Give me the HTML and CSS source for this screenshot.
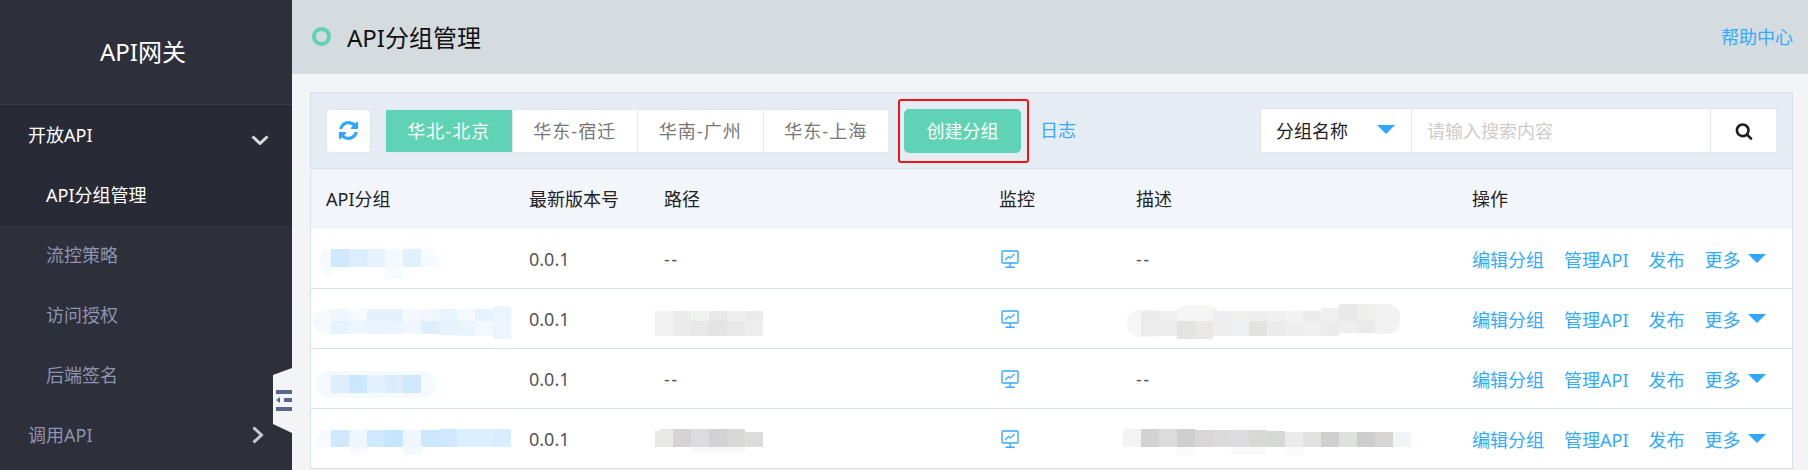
FILE: index.html
```html
<!DOCTYPE html>
<html lang="zh">
<head>
  <meta charset="utf-8">
  <title>API分组管理</title>
  <link rel="stylesheet" href="styles.css">
</head>
<body>

<aside class="sidebar">
  <div class="brand">API网关</div>
  <nav>
    <div class="nav-open">
      <a class="nav-group active">开放API
        <svg class="chev-down" width="18" height="10" viewBox="0 0 18 10"><path d="M1.5 1.5 9 8.5l7.5-7" fill="none" stroke="#d8d9de" stroke-width="3"/></svg>
      </a>
      <a class="nav-item active">API分组管理</a>
    </div>
    <a class="nav-item">流控策略</a>
    <a class="nav-item">访问授权</a>
    <a class="nav-item">后端签名</a>
    <a class="nav-group">调用API
      <svg class="chev-right" width="12" height="18" viewBox="0 0 12 18"><path d="M1.5 1.5 9.5 9l-8 7.5" fill="none" stroke="#c8cad2" stroke-width="3"/></svg>
    </a>
  </nav>
  <div class="collapse-tab">
    <svg width="16" height="21" viewBox="0 0 16 21"><path d="M0 0h16v4H0zM8 8h8v4H8zM0 10l4-3v6zM0 17h16v4H0z" fill="#56688a"/></svg>
  </div>
</aside>

<div class="content">
  <header class="page-head">
    <span class="ring"></span>
    <h1>API分组管理</h1>
    <a class="help">帮助中心</a>
  </header>

  <main class="page-body">
    <section class="panel">
      <div class="toolbar">
        <button class="refresh">
          <svg width="19" height="19" viewBox="0 0 1536 1536"><path fill="#2ea7ff" d="M1511 928q0 5-1 7-64 268-268 434.5t-478 166.5q-146 0-282.5-55t-243.5-157l-129 129q-19 19-45 19t-45-19-19-45v-448q0-26 19-45t45-19h448q26 0 45 19t19 45-19 45l-137 137q71 66 161 102t187 36q134 0 250-65t186-179q11-17 53-117 8-23 30-23h192q13 0 22.5 9.5t9.5 22.5zm25-800v448q0 26-19 45t-45 19h-448q-26 0-45-19t-19-45 19-45l138-138q-148-137-349-137-134 0-250 65t-186 179q-11 17-53 117-8 23-30 23h-199q-13 0-22.5-9.5t-9.5-22.5v-7q65-268 270-434.5t480-166.5q146 0 284 55.5t245 156.5l130-129q19-19 45-19t45 19 19 45z"/></svg>
        </button>
        <div class="tabs">
          <a class="tab on">华北-北京</a>
          <a class="tab">华东-宿迁</a>
          <a class="tab">华南-广州</a>
          <a class="tab">华东-上海</a>
        </div>
        <div class="mark-box"><button class="create">创建分组</button></div>
        <a class="log">日志</a>
        <div class="search">
          <div class="search-type">分组名称<span class="tri"></span></div>
          <div class="search-input">请输入搜索内容</div>
          <button class="search-btn">
            <svg width="18" height="18" viewBox="0 0 1792 1792"><path fill="#1c1c1c" d="M1216 832q0-185-131.5-316.5t-316.5-131.5-316.5 131.5-131.5 316.5 131.5 316.5 316.5 131.5 316.5-131.5 131.5-316.5zm512 832q0 52-38 90t-90 38q-54 0-90-38l-343-342q-179 124-399 124-143 0-273.5-55.5t-225-150-150-225-55.5-273.5 55.5-273.5 150-225 225-150 273.5-55.5 273.5 55.5 225 150 150 225 55.5 273.5q0 220-124 399l343 343q37 37 37 90z"/></svg>
          </button>
        </div>
      </div>

      <div class="row thead">
        <div>API分组</div><div>最新版本号</div><div>路径</div><div>监控</div><div>描述</div><div>操作</div>
      </div>

      <div class="row">
        <div class="col-name">
          <svg class="blur" width="218" height="59" shape-rendering="crispEdges">
            <path d="M12 21q-3 4-3 11 0 7 6 12h6V19H12zM110 19h16l-4 0 8 18h-20z" fill="#f5faff"/>
            <rect x="20" y="19" width="18" height="18" fill="#cfe8ff"/><rect x="38" y="19" width="18" height="18" fill="#dcedff"/><rect x="56" y="19" width="18" height="18" fill="#e6f2fd"/><rect x="74" y="19" width="18" height="18" fill="#f2faff"/><rect x="92" y="19" width="18" height="18" fill="#e0f0ff"/><rect x="74" y="37" width="18" height="12" fill="#f5fbff"/>
          </svg>
        </div>
        <div class="ver">0.0.1</div>
        <div class="dash">--</div>
        <div class="monitor"><svg class="mon" width="18" height="18" viewBox="0 0 18 18"><use href="#mon-icon"/></svg></div>
        <div class="dash">--</div>
        <div class="ops"><a>编辑分组</a><a>管理API</a><a>发布</a><a class="more">更多<span class="tri"></span></a></div>
      </div>

      <div class="row">
        <div class="col-name">
          <svg class="blur" width="218" height="59" shape-rendering="crispEdges">
            <path d="M12 19q-10 4-10 12 0 9 10 13h8V19z" fill="#f5faff"/>
            <g>
              <rect x="20" y="19" width="18" height="12" fill="#eef6fe"/><rect x="38" y="19" width="18" height="12" fill="#f6faff"/><rect x="56" y="19" width="18" height="12" fill="#e4f1fd"/><rect x="74" y="19" width="18" height="12" fill="#e4f1fd"/><rect x="92" y="19" width="18" height="12" fill="#f2f8fe"/><rect x="110" y="19" width="18" height="12" fill="#f0f7fe"/><rect x="128" y="19" width="18" height="12" fill="#e9f4fe"/><rect x="146" y="19" width="18" height="12" fill="#f4f9fe"/><rect x="164" y="19" width="18" height="12" fill="#e6f3fe"/><rect x="182" y="16" width="18" height="15" fill="#eaf5fe"/>
              <rect x="20" y="31" width="18" height="13" fill="#e6f2fe"/><rect x="38" y="31" width="18" height="13" fill="#ecf6fe"/><rect x="56" y="31" width="18" height="13" fill="#e8f3fe"/><rect x="74" y="31" width="18" height="13" fill="#e9f4fe"/><rect x="92" y="31" width="18" height="13" fill="#eff6fe"/><rect x="110" y="31" width="18" height="13" fill="#ddeeff"/><rect x="128" y="31" width="18" height="14" fill="#e6f2fe"/><rect x="146" y="31" width="18" height="15" fill="#e9f4fe"/><rect x="164" y="31" width="18" height="15" fill="#f3f9fe"/><rect x="182" y="31" width="18" height="18" fill="#ecf5fe"/>
            </g>
          </svg>
        </div>
        <div class="ver">0.0.1</div>
        <div>
          <svg class="blur blur-path" width="108" height="59" shape-rendering="crispEdges">
            <rect x="0" y="21" width="18" height="25" fill="#f2f2f2"/><rect x="18" y="21" width="18" height="10" fill="#ebebeb"/><rect x="36" y="21" width="18" height="10" fill="#f0f2f0"/><rect x="54" y="21" width="18" height="10" fill="#e8e8e8"/><rect x="72" y="21" width="18" height="10" fill="#eeeeee"/><rect x="90" y="21" width="18" height="10" fill="#ebebed"/>
            <rect x="18" y="31" width="18" height="15" fill="#ebebeb"/><rect x="36" y="31" width="18" height="15" fill="#e8e8e8"/><rect x="54" y="31" width="18" height="15" fill="#e3e3e3"/><rect x="72" y="31" width="18" height="15" fill="#e8e8e8"/><rect x="90" y="31" width="18" height="15" fill="#eeeeee"/>
          </svg>
        </div>
        <div class="monitor"><svg class="mon" width="18" height="18" viewBox="0 0 18 18"><use href="#mon-icon"/></svg></div>
        <div>
          <svg class="blur blur-desc" width="274" height="59">
            <rect x="0" y="20" width="40" height="27" rx="12" fill="#f6f6f6"/><rect x="240" y="14" width="33" height="30" rx="12" fill="#f2f2f2"/><rect x="46" y="15" width="48" height="34" rx="14" fill="#f5f5f5"/>
            <g shape-rendering="crispEdges">
            <rect x="14" y="21" width="18" height="10" fill="#eaeaea"/><rect x="32" y="21" width="18" height="10" fill="#efefef"/><rect x="50" y="21" width="18" height="10" fill="#f5f5f5"/><rect x="68" y="21" width="18" height="10" fill="#f5f5f3"/><rect x="86" y="21" width="18" height="10" fill="#eeeef0"/><rect x="104" y="21" width="18" height="10" fill="#f0f0ee"/><rect x="122" y="21" width="18" height="10" fill="#eeeeee"/><rect x="140" y="21" width="18" height="10" fill="#f0f0f0"/><rect x="158" y="21" width="18" height="10" fill="#f2f2f2"/><rect x="176" y="21" width="18" height="10" fill="#ebebeb"/><rect x="194" y="18" width="18" height="13" fill="#efefef"/><rect x="212" y="14" width="18" height="17" fill="#e8e8e8"/><rect x="230" y="14" width="18" height="17" fill="#eeeeec"/>
            <rect x="14" y="31" width="18" height="15" fill="#ececec"/><rect x="32" y="31" width="18" height="15" fill="#ededed"/><rect x="50" y="31" width="18" height="18" fill="#e3e3e1"/><rect x="68" y="31" width="18" height="18" fill="#e9e8e6"/><rect x="86" y="31" width="18" height="15" fill="#eeeeee"/><rect x="104" y="31" width="18" height="15" fill="#eff0f3"/><rect x="122" y="31" width="18" height="15" fill="#e2e2e0"/><rect x="140" y="31" width="18" height="15" fill="#ebebeb"/><rect x="158" y="31" width="18" height="15" fill="#eeeeee"/><rect x="176" y="31" width="18" height="15" fill="#efefef"/><rect x="194" y="31" width="18" height="15" fill="#ebebeb"/><rect x="212" y="31" width="18" height="12" fill="#eeeeee"/><rect x="230" y="31" width="18" height="12" fill="#e9e9e9"/>
            </g>
          </svg>
        </div>
        <div class="ops"><a>编辑分组</a><a>管理API</a><a>发布</a><a class="more">更多<span class="tri"></span></a></div>
      </div>

      <div class="row">
        <div class="col-name">
          <svg class="blur" width="218" height="59" shape-rendering="geometricPrecision">
            <rect x="5" y="21" width="120" height="27" rx="13" fill="#f5faff"/>
            <g shape-rendering="crispEdges"><rect x="20" y="25" width="18" height="18" fill="#dcedff"/><rect x="38" y="25" width="18" height="18" fill="#cbe6ff"/><rect x="56" y="25" width="18" height="18" fill="#e3f1fd"/><rect x="74" y="25" width="18" height="18" fill="#daecff"/><rect x="92" y="25" width="18" height="18" fill="#cfe8ff"/></g>
          </svg>
        </div>
        <div class="ver">0.0.1</div>
        <div class="dash">--</div>
        <div class="monitor"><svg class="mon" width="18" height="18" viewBox="0 0 18 18"><use href="#mon-icon"/></svg></div>
        <div class="dash">--</div>
        <div class="ops"><a>编辑分组</a><a>管理API</a><a>发布</a><a class="more">更多<span class="tri"></span></a></div>
      </div>

      <div class="row">
        <div class="col-name">
          <svg class="blur" width="218" height="59" shape-rendering="crispEdges">
            <path d="M20 20h-6q-10 2-10 17h16z" fill="#f5faff"/>
            <rect x="20" y="20" width="18" height="17" fill="#cfe8ff"/><rect x="38" y="20" width="18" height="17" fill="#eef6fe"/><rect x="56" y="20" width="18" height="17" fill="#cde8ff"/><rect x="74" y="20" width="18" height="17" fill="#c8e5ff"/><rect x="92" y="20" width="18" height="17" fill="#eef6fe"/><rect x="110" y="20" width="18" height="17" fill="#cbe8ff"/><rect x="128" y="19" width="18" height="18" fill="#cfe8ff"/><rect x="146" y="19" width="18" height="18" fill="#dcefff"/><rect x="164" y="19" width="18" height="18" fill="#dcefff"/><rect x="182" y="19" width="18" height="18" fill="#d8edff"/>
            <rect x="38" y="37" width="18" height="7" fill="#f7fbff"/><rect x="92" y="37" width="18" height="7" fill="#f3f8ff"/>
          </svg>
        </div>
        <div class="ver">0.0.1</div>
        <div>
          <svg class="blur blur-path" width="108" height="59" shape-rendering="crispEdges">
            <rect x="0" y="21" width="18" height="16" fill="#e8e8e6"/><rect x="4" y="19" width="14" height="2" fill="#e8e8e6"/><rect x="18" y="19" width="18" height="18" fill="#d6d4d2"/><rect x="36" y="19" width="18" height="18" fill="#dcdcde"/><rect x="54" y="19" width="18" height="18" fill="#d2d2d4"/><rect x="72" y="19" width="18" height="18" fill="#d8d8d4"/><rect x="90" y="22" width="18" height="15" fill="#dcdcdc"/>
            <rect x="36" y="37" width="54" height="6" fill="#f8f8f8"/>
          </svg>
        </div>
        <div class="monitor"><svg class="mon" width="18" height="18" viewBox="0 0 18 18"><use href="#mon-icon"/></svg></div>
        <div>
          <svg class="blur blur-desc-b" width="288" height="59" shape-rendering="crispEdges">
            <rect x="0" y="19" width="18" height="18" fill="#f3f3f3"/><rect x="18" y="19" width="18" height="18" fill="#d2d2d2"/><rect x="36" y="19" width="18" height="18" fill="#dcdcdc"/><rect x="54" y="19" width="18" height="18" fill="#cfcfcf"/><rect x="72" y="20" width="18" height="17" fill="#d8d6d6"/><rect x="90" y="20" width="18" height="17" fill="#dadada"/><rect x="108" y="20" width="18" height="17" fill="#dddde0"/><rect x="126" y="20" width="18" height="17" fill="#d8d8d6"/><rect x="144" y="21" width="18" height="16" fill="#d6d8d6"/><rect x="162" y="22" width="18" height="15" fill="#ebebeb"/><rect x="180" y="22" width="18" height="15" fill="#e2e2e0"/><rect x="198" y="22" width="18" height="15" fill="#cfcfcf"/><rect x="216" y="22" width="18" height="15" fill="#dfe1df"/><rect x="234" y="22" width="18" height="15" fill="#cdcdcd"/><rect x="252" y="22" width="18" height="15" fill="#d8d6d4"/><rect x="270" y="22" width="18" height="15" fill="#f2f5f8"/>
            <rect x="54" y="37" width="18" height="9" fill="#fafafa"/><rect x="108" y="37" width="36" height="8" fill="#fafafa"/><rect x="162" y="37" width="18" height="9" fill="#fafafa"/>
          </svg>
        </div>
        <div class="ops"><a>编辑分组</a><a>管理API</a><a>发布</a><a class="more">更多<span class="tri"></span></a></div>
      </div>
    </section>
  </main>
</div>

<svg class="defs" width="0" height="0">
  <symbol id="mon-icon" viewBox="0 0 18 18">
    <rect x="1" y="1" width="16" height="12" rx="1" fill="none" stroke="#33aaff" stroke-width="1.4"/>
    <path d="M4 10l3.5-3.5 2 1.5L13.5 4" fill="none" stroke="#33aaff" stroke-width="1.2"/>
    <path d="M9 13v4M4.5 17.2h9" fill="none" stroke="#33aaff" stroke-width="1.4"/>
  </symbol>
</svg>

</body>
</html>
```

FILE: styles.css
```css
* { box-sizing: border-box; }
html, body { height: 470px; overflow: hidden; }
body {
  margin: 0;
  display: flex;
  font-family: "Noto Sans", "Noto Sans CJK SC", "Liberation Sans", sans-serif;
  font-size: 18px;
  color: #222;
  background: #f3f4f6;
}
a { color: inherit; text-decoration: none; }
button { font: inherit; cursor: pointer; }
.defs { position: absolute; }

/* sidebar */
.sidebar { position: relative; width: 292px; flex: none; background: #2d2f3b; color: #8e94ad; }
.brand { height: 105px; border-bottom: 1px solid #3a3d4a; display: flex; align-items: center; justify-content: center; padding: 0 6px 4px 0; font-size: 24px; color: #fff; }
.nav-open { background: #282a35; }
.nav-group { height: 60px; padding: 0 23px 2px 28px; display: flex; align-items: center; justify-content: space-between; }
.nav-item { height: 60px; padding: 0 0 2px 46px; display: flex; align-items: center; }
.active { color: #fff; }
.chev-down { margin-top: 12px; }
.chev-right { margin-right: 5px; margin-top: 2px; }
.collapse-tab {
  position: absolute;
  right: 0;
  top: 368px;
  width: 19px;
  height: 65px;
  background: #f3f4f6;
  clip-path: polygon(0 7px, 100% 0, 100% 100%, 0 56px);
  padding: 22px 0 0 3px;
  display: flex;
}

/* header */
.content { flex: 1; min-width: 0; }
.page-head { height: 74px; background: #d5dcdf; display: flex; align-items: center; padding: 0 15px 2px 19px; }
.ring { width: 19px; height: 19px; border: 4px solid #5fd3b3; border-radius: 50%; margin-right: 16px; margin-left: 1px; }
h1 { margin: 0; font-size: 24px; font-weight: normal; color: #111; }
.help { margin-left: auto; color: #33aaff; }

/* panel */
.page-body { padding: 18px 15px 0 18px; }
.panel { border: 1px solid #d7e2ec; border-bottom: 0; background: #fff; }
.toolbar { height: 76px; padding: 0 15px; display: flex; align-items: center; background: #e5ecf4; border-bottom: 1px solid #d7e2ec; }
.refresh { width: 45px; height: 44px; padding: 0; margin-right: 14px; background: #fff; border: 1px solid #dfe7ef; border-radius: 4px; display: flex; align-items: center; justify-content: center; }
.tabs { display: flex; height: 44px; background: #fff; border: 1px solid #dfe7ef; }
.tab { width: 125.5px; padding-bottom: 1px; letter-spacing: 1px; display: flex; align-items: center; justify-content: center; color: #777; border-left: 1px solid #dfe7ef; }
.tab:first-child { border-left: 0; }
.tab.on { background: #5fd3b3; color: #fff; }
.mark-box { margin-left: 9px; padding: 8px 6px 8px 4px; border: 2px solid #f01414; border-radius: 3px; display: flex; }
.create { width: 117px; height: 44px; border: 0; border-radius: 5px; background: #5fd3b3; color: #fff; padding: 0 0 2px; }
.log { margin-left: 11px; color: #33aaff; margin-bottom: 4px; }
.search { margin-left: auto; display: flex; height: 45px; background: #fff; border: 1px solid #dfe7ef; }
.search-type { width: 151px; padding: 0 0 1px 15px; display: flex; align-items: center; color: #222; border-right: 1px solid #dfe7ef; }
.search-type .tri { margin-left: 29px; margin-bottom: 1px; }
.search-input { width: 299px; padding: 0 0 1px 15px; display: flex; align-items: center; color: #ccc; border-right: 1px solid #dfe7ef; }
.search-btn { width: 65px; padding: 0; background: none; border: 0; display: flex; align-items: center; justify-content: center; }
.tri { display: inline-block; width: 0; height: 0; border-left: 9px solid transparent; border-right: 9px solid transparent; border-top: 9px solid #2ea7ff; }

/* table rows */
.row {
  display: grid;
  grid-template-columns: 218px 135px 335px 137px 336px 1fr;
  height: 60px;
  padding-bottom: 2px;
  align-items: center;
  color: #555;
  border-bottom: 1px solid #d7e2ec;
}
.thead { background: #f2f6fb; color: #222; border-bottom: 0; height: 60px; }
.thead > div:first-child { padding-left: 15px; }
.col-name { height: 59px; }
.blur { display: block; margin-top: 1px; margin-bottom: -1px; }
.blur-path { margin-left: -9px; }
.blur-desc { margin-left: -9px; }
.blur-desc-b { margin-left: -13px; }
.dash { letter-spacing: 1.5px; }
.monitor { display: flex; }
.mon { margin-left: 2px; }
.ops { display: flex; gap: 20px; color: #33aaff; }
.more { display: flex; align-items: center; }
.more .tri { margin-left: 7px; }
```
